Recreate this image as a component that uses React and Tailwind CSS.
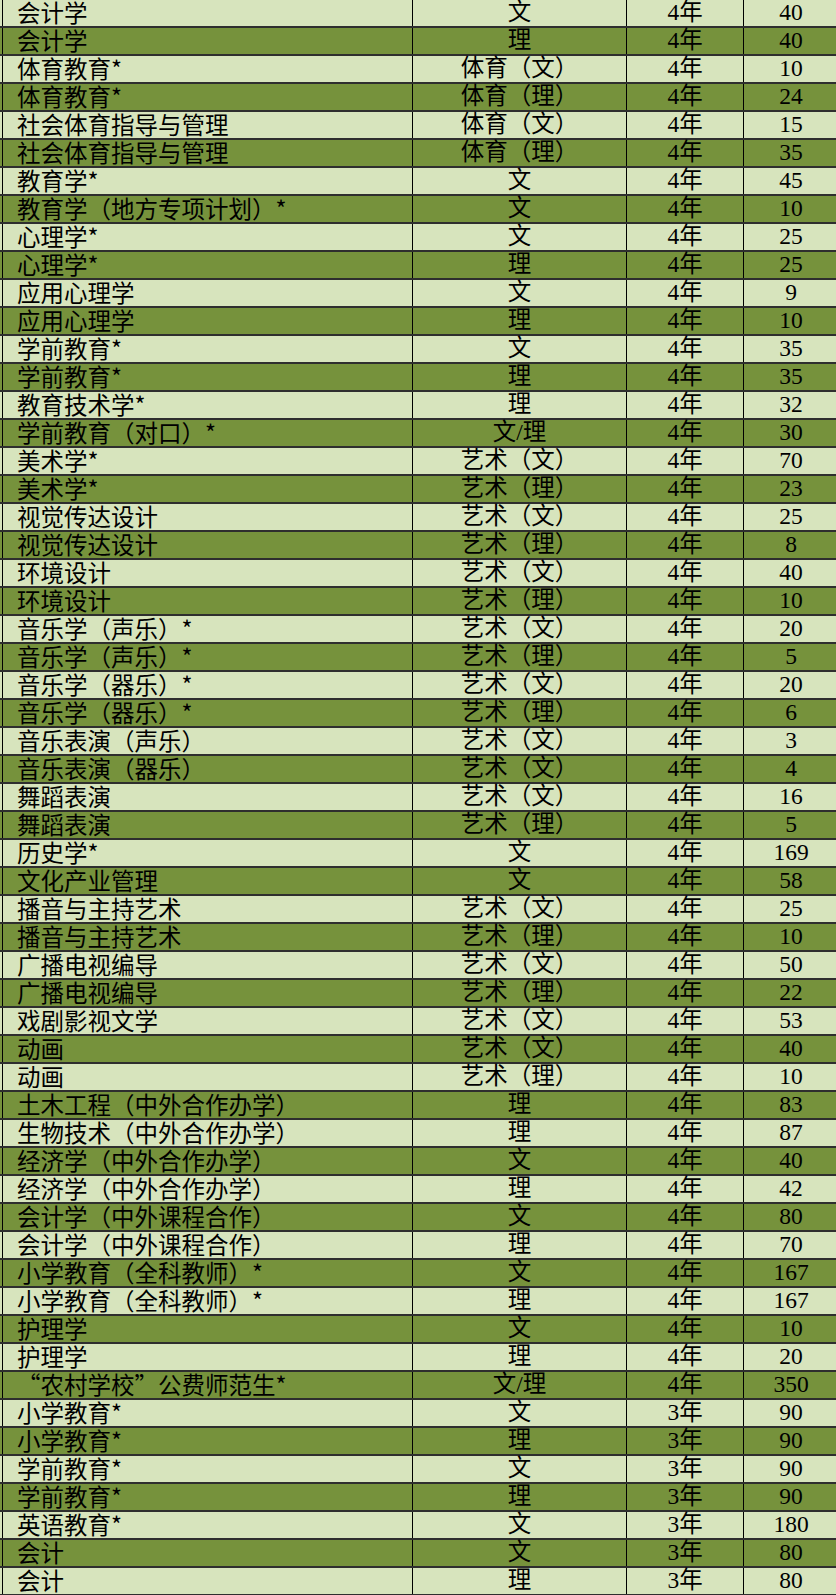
const rows = [
    ['会计学', '文', '4年', '40'],
    ['会计学', '理', '4年', '40'],
    ['体育教育*', '体育（文）', '4年', '10'],
    ['体育教育*', '体育（理）', '4年', '24'],
    ['社会体育指导与管理', '体育（文）', '4年', '15'],
    ['社会体育指导与管理', '体育（理）', '4年', '35'],
    ['教育学*', '文', '4年', '45'],
    ['教育学（地方专项计划）*', '文', '4年', '10'],
    ['心理学*', '文', '4年', '25'],
    ['心理学*', '理', '4年', '25'],
    ['应用心理学', '文', '4年', '9'],
    ['应用心理学', '理', '4年', '10'],
    ['学前教育*', '文', '4年', '35'],
    ['学前教育*', '理', '4年', '35'],
    ['教育技术学*', '理', '4年', '32'],
    ['学前教育（对口）*', '文/理', '4年', '30'],
    ['美术学*', '艺术（文）', '4年', '70'],
    ['美术学*', '艺术（理）', '4年', '23'],
    ['视觉传达设计', '艺术（文）', '4年', '25'],
    ['视觉传达设计', '艺术（理）', '4年', '8'],
    ['环境设计', '艺术（文）', '4年', '40'],
    ['环境设计', '艺术（理）', '4年', '10'],
    ['音乐学（声乐）*', '艺术（文）', '4年', '20'],
    ['音乐学（声乐）*', '艺术（理）', '4年', '5'],
    ['音乐学（器乐）*', '艺术（文）', '4年', '20'],
    ['音乐学（器乐）*', '艺术（理）', '4年', '6'],
    ['音乐表演（声乐）', '艺术（文）', '4年', '3'],
    ['音乐表演（器乐）', '艺术（文）', '4年', '4'],
    ['舞蹈表演', '艺术（文）', '4年', '16'],
    ['舞蹈表演', '艺术（理）', '4年', '5'],
    ['历史学*', '文', '4年', '169'],
    ['文化产业管理', '文', '4年', '58'],
    ['播音与主持艺术', '艺术（文）', '4年', '25'],
    ['播音与主持艺术', '艺术（理）', '4年', '10'],
    ['广播电视编导', '艺术（文）', '4年', '50'],
    ['广播电视编导', '艺术（理）', '4年', '22'],
    ['戏剧影视文学', '艺术（文）', '4年', '53'],
    ['动画', '艺术（文）', '4年', '40'],
    ['动画', '艺术（理）', '4年', '10'],
    ['土木工程（中外合作办学）', '理', '4年', '83'],
    ['生物技术（中外合作办学）', '理', '4年', '87'],
    ['经济学（中外合作办学）', '文', '4年', '40'],
    ['经济学（中外合作办学）', '理', '4年', '42'],
    ['会计学（中外课程合作）', '文', '4年', '80'],
    ['会计学（中外课程合作）', '理', '4年', '70'],
    ['小学教育（全科教师）*', '文', '4年', '167'],
    ['小学教育（全科教师）*', '理', '4年', '167'],
    ['护理学', '文', '4年', '10'],
    ['护理学', '理', '4年', '20'],
    ['“农村学校”公费师范生*', '文/理', '4年', '350'],
    ['小学教育*', '文', '3年', '90'],
    ['小学教育*', '理', '3年', '90'],
    ['学前教育*', '文', '3年', '90'],
    ['学前教育*', '理', '3年', '90'],
    ['英语教育*', '文', '3年', '180'],
    ['会计', '文', '3年', '80'],
    ['会计', '理', '3年', '80'],
]

function Row({ row, index }) {
    const [name, kind, years, count] = row
    const bg = index % 2 === 0 ? 'bg-[#d7e4bd]' : 'bg-[#76923c]'
    return (
        <div className={`grid grid-cols-[412px_214px_117px_95px] h-[28px] border-b-2 border-[#2e2e2e] ${bg}`}>
            <div className="ml-[2px] border-l border-black pl-[14px] flex items-center whitespace-nowrap font-['Noto_Sans_CJK_SC',sans-serif]">
                {name}
            </div>
            <div className="border-l border-black flex items-center justify-center whitespace-nowrap">
                {kind}
            </div>
            <div className="border-l border-black flex items-center justify-center">
                {years}
            </div>
            <div className="border-l border-black flex items-center justify-center">
                {count}
            </div>
        </div>
    )
}

export default function App() {
    return (
        <div className="w-[836px] h-[1595px] overflow-hidden bg-[#d7e4bd]">
            <div className="w-[838px] text-[23.5px] leading-none text-black font-['Liberation_Serif','Noto_Sans_CJK_SC',serif]">
                {rows.map((row, i) => (
                    <Row key={i} row={row} index={i} />
                ))}
            </div>
        </div>
    )
}
